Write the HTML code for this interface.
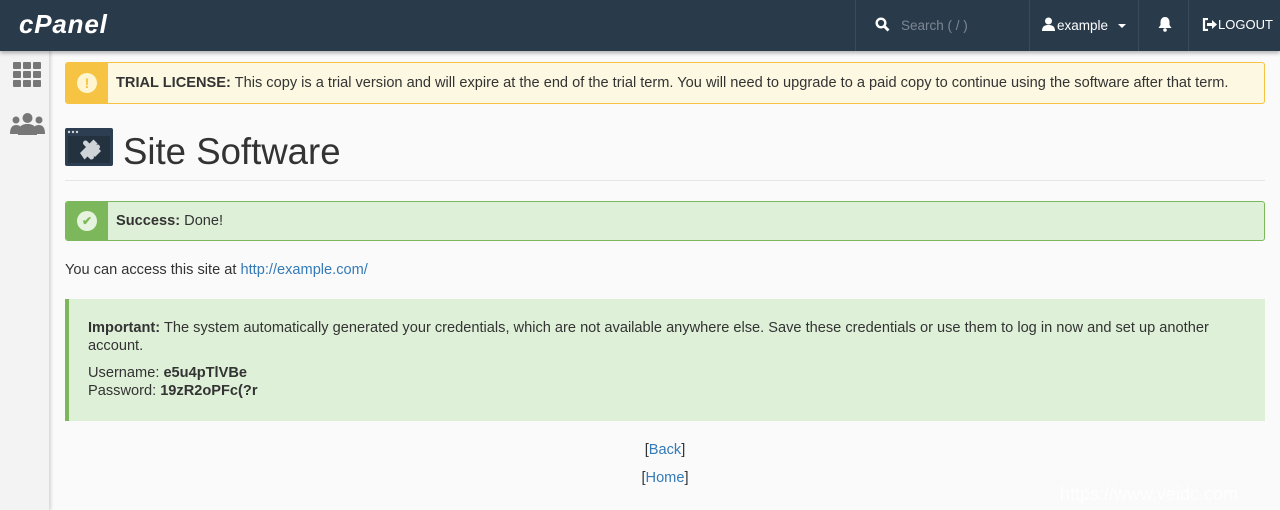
<!DOCTYPE html>
<html><head><style>
*{box-sizing:border-box;margin:0;padding:0}
body{width:1280px;height:510px;overflow:hidden;background:#fafafa;font-family:"Liberation Sans",sans-serif;font-size:14.6px;color:#333;position:relative}
.hdr{position:absolute;left:0;top:0;width:1280px;height:51px;background:#293a4a;box-shadow:0 2px 4px rgba(0,0,0,.3);z-index:2}
.logo{position:absolute;left:19px;top:9px;color:#fff;font-size:26px;font-weight:bold;font-style:italic;letter-spacing:0.8px}
.sep{position:absolute;top:0;width:1px;height:51px;background:#3a4c5c}
.side{position:absolute;left:0;top:51px;width:50px;height:459px;background:#f3f3f3;border-right:1px solid #ddd;box-shadow:1px 0 3px rgba(0,0,0,.15)}
.alert{position:absolute;left:65px;width:1200px;border:1px solid;border-radius:3px;overflow:hidden}
.alert .ic{position:absolute;left:0;top:0;bottom:0;width:42px}
.circ{position:absolute;left:11px;width:20px;height:20px;border-radius:50%;background:#fff5d0;text-align:center;font-weight:bold;line-height:20px;font-size:14px}
a{color:#337ab7;text-decoration:none}
</style></head><body>
<div class="hdr">
 <div class="logo">cPanel</div>
 <div class="sep" style="left:855px"></div>
 <svg style="position:absolute;left:875px;top:17px" width="15" height="15" viewBox="0 0 15 15"><circle cx="6" cy="6" r="4.3" fill="none" stroke="#fff" stroke-width="2.4"/><path d="M9 9l4.5 4.5" stroke="#fff" stroke-width="2.8"/></svg>
 <div style="position:absolute;left:901px;top:18px;color:#7d8893;font-size:13.5px">Search ( / )</div>
 <div class="sep" style="left:1029px"></div>
 <svg style="position:absolute;left:1042px;top:17px" width="13" height="14" viewBox="0 0 13 14"><circle cx="6.5" cy="4" r="3.5" fill="#fff"/><path d="M0 14c0-5 3-6 6.5-6s6.5 1 6.5 6z" fill="#fff"/></svg>
 <div style="position:absolute;left:1057px;top:18px;color:#fff;font-size:13.5px">example</div>
 <div style="position:absolute;left:1118px;top:24px;border:4px solid transparent;border-top:4px solid #fff"></div>
 <div class="sep" style="left:1138px"></div>
 <svg style="position:absolute;left:1157px;top:16px" width="16" height="16" viewBox="0 0 16 16"><path d="M8 1c3 0 4.5 2.5 4.5 5v3l2 3H1.5l2-3V6C3.5 3.5 5 1 8 1z" fill="#fff"/><circle cx="8" cy="14" r="1.8" fill="#fff"/></svg>
 <div class="sep" style="left:1188px"></div>
 <svg style="position:absolute;left:1202px;top:18px" width="15" height="13" viewBox="0 0 15 13"><path d="M6 1H2v11h4" fill="none" stroke="#fff" stroke-width="2.2"/><path d="M5 5h5V2l5 4.5-5 4.5V8H5z" fill="#fff"/></svg>
 <div style="position:absolute;left:1218px;top:17px;color:#fff;font-size:13px">LOGOUT</div>
</div>
<div class="side">
 <svg style="position:absolute;left:13px;top:11px" width="29" height="26" viewBox="0 0 29 26"><g fill="#777"><rect x="0" y="0" width="8" height="7" rx="1"/><rect x="10" y="0" width="8" height="7" rx="1"/><rect x="20" y="0" width="8" height="7" rx="1"/><rect x="0" y="9" width="8" height="7" rx="1"/><rect x="10" y="9" width="8" height="7" rx="1"/><rect x="20" y="9" width="8" height="7" rx="1"/><rect x="0" y="18" width="8" height="7" rx="1"/><rect x="10" y="18" width="8" height="7" rx="1"/><rect x="20" y="18" width="8" height="7" rx="1"/></g></svg>
 <svg style="position:absolute;left:10px;top:62px" width="35" height="22" viewBox="0 0 35 22"><g fill="#777"><circle cx="6" cy="7" r="3.5"/><circle cx="29" cy="7" r="3.5"/><circle cx="17.5" cy="5" r="5"/><path d="M0 21c0-6 2-9 6-9s5 2 5 4v5z"/><path d="M35 21c0-6-2-9-6-9s-5 2-5 4v5z"/><path d="M8 22c0-8 3-11 9.5-11S27 14 27 22z"/></g></svg>
</div>
<div class="alert" style="top:62px;height:42px;border-color:#f6c342;background:#fcf8e1">
 <div class="ic" style="background:#f6c342"><div class="circ" style="top:10px;color:#f6c342">!</div></div>
 <div style="position:absolute;left:50px;top:12px;white-space:nowrap"><b>TRIAL LICENSE:</b> This copy is a trial version and will expire at the end of the trial term. You will need to upgrade to a paid copy to continue using the software after that term.</div>
</div>
<svg style="position:absolute;left:65px;top:128px" width="48" height="38" viewBox="0 0 48 38"><rect width="48" height="38" rx="2" fill="#2e3e52"/><rect x="3" y="8" width="42" height="27" fill="#24313f"/><g fill="#cfd4d8"><circle cx="4" cy="4" r="1.2"/><circle cx="8" cy="4" r="1.2"/><circle cx="12" cy="4" r="1.2"/><path d="M15 25l6-6-2-2a2.5 2.5 0 1 1 3.5-3.5l2 2 4-4 4 4-2 2a2.5 2.5 0 1 1 3.5 3.5l2 2-6 6-2-2a2.5 2.5 0 1 1-3.5 3.5l-2-2-3 3z"/></g></svg>
<div style="position:absolute;left:123px;top:131px;font-size:36.6px;color:#333">Site Software</div>
<div style="position:absolute;left:65px;top:180px;width:1200px;height:1px;background:#e5e5e5"></div>
<div class="alert" style="top:201px;height:40px;border-color:#7cb85b;background:#dff0d8">
 <div class="ic" style="background:#7cb85b"><div class="circ" style="top:9px;background:#e6f3de;color:#7cb85b;font-size:12px">✔</div></div>
 <div style="position:absolute;left:50px;top:11px"><b>Success:</b> Done!</div>
</div>
<div style="position:absolute;left:65px;top:262px">You can access this site at <a>http://example.com/</a></div>
<div style="position:absolute;left:65px;top:299px;width:1200px;height:122px;background:#dff0d8;border-left:4px solid #7cb85b;padding:20px 19px;line-height:18px">
 <div><b>Important:</b> The system automatically generated your credentials, which are not available anywhere else. Save these credentials or use them to log in now and set up another account.</div>
 <div style="margin-top:9px">Username: <b>e5u4pTlVBe</b><br>Password: <b>19zR2oPFc(?r</b></div>
</div>
<div style="position:absolute;left:0;width:1330px;top:442px;text-align:center">[<a>Back</a>]</div>
<div style="position:absolute;left:0;width:1330px;top:470px;text-align:center">[<a>Home</a>]</div>
<div style="position:absolute;left:1060px;top:484px;font-size:18px;color:#fff;opacity:.9">https://www.veidc.com</div>
</body></html>
